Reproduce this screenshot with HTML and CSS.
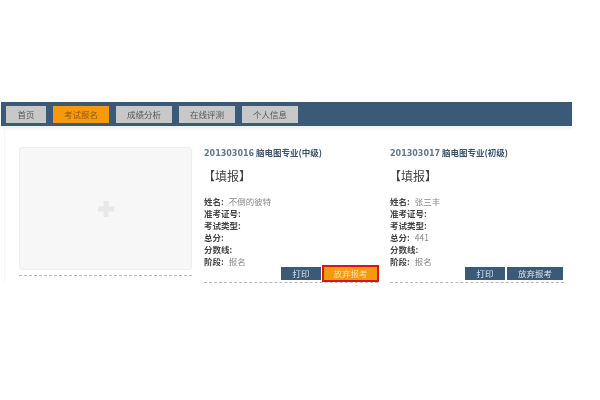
FILE: index.html
```html
<!DOCTYPE html>
<html lang="zh">
<head>
<meta charset="utf-8">
<title>考试报名</title>
<link rel="stylesheet" href="styles.css">
</head>
<body>
<div class="page">
  <nav class="nav">
    <a class="tab">首页</a>
    <a class="tab wide active">考试报名</a>
    <a class="tab wide">成绩分析</a>
    <a class="tab wide">在线评测</a>
    <a class="tab wide">个人信息</a>
  </nav>
  <main class="panel">
    <div class="left">
      <div class="upload">
        <svg class="plus" width="16" height="16" viewBox="0 0 16 16"><path d="M5.500 0h5v5.500h5.500v5h-5.500v5.500h-5v-5.500h-5.500v-5h5.500z" fill="#e8e8e8"/></svg>
      </div>
    </div>
    <section class="card first">
      <h2 class="title"><span class="num">201303016</span> <b>脑电图专业(中级)</b></h2>
      <div class="state">【填报】</div>
      <ul class="info">
        <li><b>姓名:</b><span class="val">不倒的彼特</span></li>
        <li><b>准考证号:</b></li>
        <li><b>考试类型:</b></li>
        <li><b>总分:</b></li>
        <li><b>分数线:</b></li>
        <li><b>阶段:</b><span class="val">报名</span></li>
      </ul>
      <div class="actions">
        <button class="btn print">打印</button>
        <button class="btn quit hot">放弃报考</button>
      </div>
    </section>
    <section class="card second">
      <h2 class="title"><span class="num">201303017</span> <b>脑电图专业(初级)</b></h2>
      <div class="state">【填报】</div>
      <ul class="info">
        <li><b>姓名:</b><span class="val">张三丰</span></li>
        <li><b>准考证号:</b></li>
        <li><b>考试类型:</b></li>
        <li><b>总分:</b><span class="val">441</span></li>
        <li><b>分数线:</b></li>
        <li><b>阶段:</b><span class="val">报名</span></li>
      </ul>
      <div class="actions">
        <button class="btn print">打印</button>
        <button class="btn quit">放弃报考</button>
      </div>
    </section>
  </main>
</div>
</body>
</html>
```
FILE: styles.css
```css
* { box-sizing: border-box; }
html, body { margin: 0; padding: 0; background: #fff; }
body { width: 600px; height: 400px; overflow: hidden; font-family: "Noto Sans CJK SC", "DejaVu Sans", sans-serif; color: #666; }
.page { width: 571px; margin: 102px 0 0 1px; filter: blur(0.4px); }
.nav { height: 24px; background: #3a5a78; display: flex; align-items: center; gap: 7px; padding: 0 0 0 5px; box-shadow: 0 3px 3px #eef0f2; }
.tab { height: 17px; width: 40px; background: #c8c8c8; font-size: 8.500px; line-height: 16px; text-align: center; color: #555; }
.tab.wide { width: 56px; }
.tab.active { background: #f59a0c; color: #8a5a10; }
.panel { display: flex; height: 158px; border-left: 1px solid #f7f7f7; margin-left: 3px; }
.left { width: 173px; margin-left: 14px; padding-top: 21px; }
.upload { width: 173px; height: 123px; background: #f7f7f7; border: 1px solid #eeeeee; border-radius: 3px; display: flex; align-items: center; justify-content: center; }
.left::after { content: ""; display: block; margin-top: 5px; border-top: 1px dashed #bbb; }
.card { padding-top: 20px; }
.card.first { width: 186px; margin-left: 12px; }
.card.second { width: 175px; }
.title { margin: 0; font-size: 8.500px; line-height: 12px; font-weight: normal; white-space: nowrap; }
.num { font-family: "DejaVu Sans", sans-serif; font-size: 8px; font-weight: bold; color: #66788a; }
.title b { color: #3a5570; }
.state { margin-top: 7px; font-size: 12px; line-height: 18px; color: #444; margin-left: -1px; }
.info { list-style: none; margin: 10px 0 0; padding: 0; font-size: 8.500px; line-height: 12px; color: #888; }
.info b { color: #444; }
.val { margin-left: 5px; }
.actions { display: flex; justify-content: flex-end; gap: 2px; width: 174px; padding: 0 1px 2px 0; border-bottom: 1px dashed #bbb; }
.btn { height: 13px; padding: 0; border: 0; background: #3a5a78; color: #d8e0e8; font: 8.500px/13px "Noto Sans CJK SC", sans-serif; }
.print { width: 40px; }
.quit { width: 56px; }
.hot { background: #f59a0c; color: #f8e0b0; outline: 2px solid #d8141c; position: relative; z-index: 1; width: 53px; margin-left: 1px; }
```
